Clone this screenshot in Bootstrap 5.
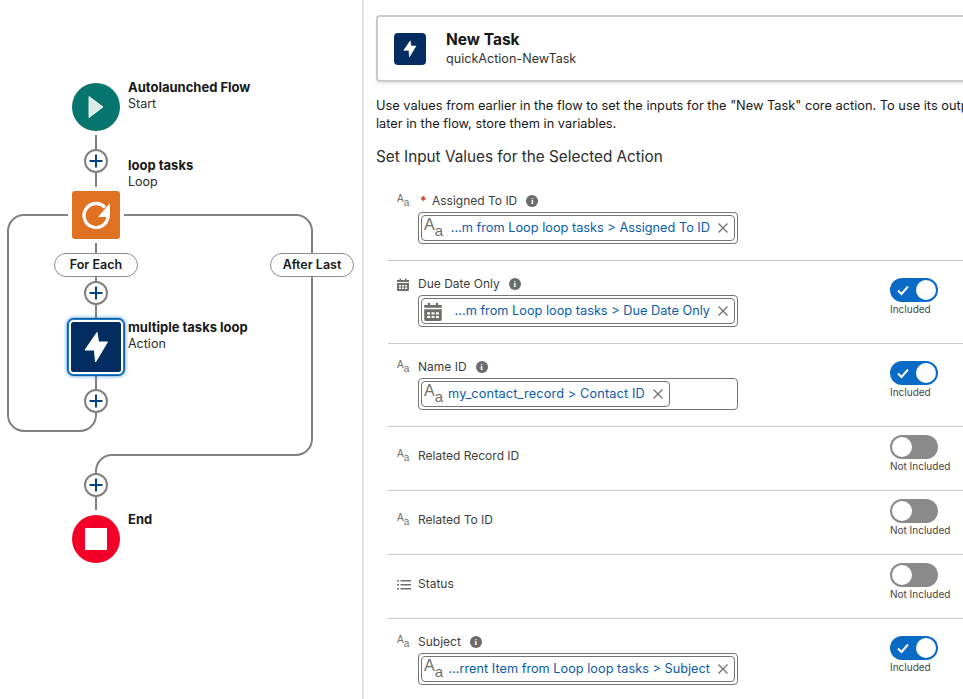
<!DOCTYPE html>
<html lang="en"><head><meta charset="utf-8"><title>New Task</title>
<link href="https://cdn.jsdelivr.net/npm/bootstrap@5.3.0/dist/css/bootstrap.min.css" rel="stylesheet">
<style>
html,body{height:100%;}
body{width:963px;height:699px;overflow:hidden;font-family:Inter,"Liberation Sans",sans-serif;font-size:12px;color:#181818;background:#fff;}
.flow-pane{position:relative;width:362px;flex:none;height:699px;}
.flow-pane svg.wires{position:absolute;left:0;top:0;}
.node-label{position:absolute;left:128px;line-height:16px;font-size:12.5px;white-space:nowrap;color:#2b2b2b;}
.node-label b{display:block;font-weight:700;font-size:13px;color:#181818;margin:-1px 0 1px;}
.branch-pill{position:absolute;top:253px;width:84px;height:24px;border:1px solid #8a8a8a;border-radius:12px;background:#fff;font-weight:600;font-size:12.5px;line-height:22px;text-align:center;}
.detail-pane{flex:none;width:601px;height:699px;overflow:hidden;border-left:2px solid #e3e3e3;padding-left:12px;}
.detail-inner{width:660px;}
.action-card{margin-top:15px;height:67px;width:640px;border:2px solid #c9c9c9;border-radius:4px;box-shadow:0 2px 3px rgba(0,0,0,.08);padding-left:16px;gap:20px;}
.action-icon{width:32px;height:32px;background:#032d60;border-radius:4px;}
.action-copy{padding-top:2px;}
.action-title{font-size:15.500px;font-weight:700;line-height:18px;}
.action-sub{font-size:12.600px;line-height:20px;color:#333;}
.intro-text{margin:15px 0 0;font-size:12.800px;line-height:18px;width:640px;}
.section-title{margin:14px 0 0;font-size:15.300px;font-weight:400;line-height:20px;color:#2b2b2b;}
.field-list{margin:11px 0 0 12px;}
.field-row{display:grid;grid-template-columns:30px 472px auto;border-bottom:1px solid #c9c9c9;height:83px;padding-top:14px;}
.field-row.short-row{height:64px;padding-top:20px;}
.type-cell{height:18px;padding-left:9px;color:#706e6b;}
.aa-mark{display:inline-flex;color:#706e6b;font-family:"Liberation Sans",sans-serif;line-height:1;font-size:10px;vertical-align:top;margin-top:2px;}
.aa-mark i{font-style:normal;font-size:10px;position:relative;top:4px;}
.aa-big{font-size:16px;margin:0 5px 6px 0;}
.aa-big i{font-size:15px;top:6px;}
.label-line{height:18px;line-height:18px;gap:8px;font-size:12px;color:#3e3e3c;}
.req-star{color:#c23934;font-weight:700;width:6px;margin:0 -2px 0 2px;}
.info-dot{width:12px;height:12px;border-radius:50%;background:#6b6b6b;color:#fff;font:700 9px/12px "Liberation Serif",serif;text-align:center;margin-left:1px;}
.value-box{margin-top:2px;width:320px;height:32px;border:1px solid #747474;border-radius:4px;padding:2px;}
.value-pill{height:26px;border:1px solid #747474;border-radius:4px;padding:0 6px 0 2px;color:#0b5cab;font-size:12.750px;white-space:nowrap;}
.value-pill.full-pill{width:100%;}
.value-pill .pill-text{margin-left:auto;margin-right:8px;}
.name-text{letter-spacing:.13px;}
.x-mark{flex:none;}
.toggle-cell{padding-top:3px;}
.short-row .toggle-cell{margin-top:-15px;}
.switch-track{width:48px;height:24px;border-radius:12px;padding:2px;}
.switch-track.on{background:#0a6bc7;justify-content:space-between;}
.switch-track.off{background:#8a8a8a;}
.switch-knob{width:20px;height:20px;border-radius:50%;background:#fff;}
.switch-text{font-size:10px;line-height:12px;margin-top:1px;color:#444;white-space:nowrap;}
</style></head>
<body class="d-flex">
<div class="flow-pane">
<svg class="wires" width="362" height="699" viewBox="0 0 362 699" fill="none">
<g stroke="#808080" stroke-width="2">
<path d="M96 135V187M96 243V253M96 277V319M96 375V415A16 16 0 0 1 80 431H24A16 16 0 0 1 8 415V231A16 16 0 0 1 24 215H68"/>
<path d="M124 215H296A16 16 0 0 1 312 231V253M312 277V439A16 16 0 0 1 296 455H112A16 16 0 0 0 96 471V510"/>
</g>
<circle cx="96" cy="107" r="24" fill="#06756e"/>
<path d="M89 96.500V117.500L103 107Z" fill="#fff" fill-opacity=".85" stroke="#fff" stroke-opacity=".85" stroke-linejoin="round"/>
<rect x="72" y="191" width="48" height="48" rx="3" fill="#e07022"/>
<path d="M105 207.500A12 12 0 1 0 108 216.500" stroke="#fff" stroke-width="3.300"/>
<path d="M110 203V217H98Z" fill="#fff"/>
<rect x="65" y="316" width="62" height="62" rx="9" stroke="#1b7fd6" stroke-opacity=".15" stroke-width="2"/>
<rect x="67" y="318" width="58" height="58" rx="7" fill="#032d60" stroke="#1b7fd6" stroke-opacity=".4" stroke-width="2"/>
<rect x="68.500" y="319.500" width="55" height="55" rx="5.500" stroke="#1b7fd6" stroke-width="1.500"/>
<rect x="70" y="321" width="52" height="52" rx="3.500" stroke="#fff" stroke-width="2"/>
<path d="M97 332.500L85 350H94.500L95.500 362L107.500 342H98.500Z" fill="#fff" stroke="#fff" stroke-linejoin="round"/>
<circle cx="96" cy="539" r="24" fill="#f20028"/>
<rect x="85" y="528" width="22" height="22" fill="#fff"/>
<g>
<circle cx="96" cy="161" r="11" fill="#fff" stroke="#808080" stroke-width="2"/><path d="M96 154.500V167.500M89.500 161H102.500" stroke="#014486" stroke-width="2"/>
<circle cx="96" cy="293" r="11" fill="#fff" stroke="#808080" stroke-width="2"/><path d="M96 286.500V299.500M89.500 293H102.500" stroke="#014486" stroke-width="2"/>
<circle cx="96" cy="401" r="11" fill="#fff" stroke="#808080" stroke-width="2"/><path d="M96 394.500V407.500M89.500 401H102.500" stroke="#014486" stroke-width="2"/>
<circle cx="96" cy="485" r="11" fill="#fff" stroke="#808080" stroke-width="2"/><path d="M96 478.500V491.500M89.500 485H102.500" stroke="#014486" stroke-width="2"/>
</g>
</svg>
<div class="node-label" style="top:80px"><b>Autolaunched Flow</b>Start</div>
<div class="node-label" style="top:158px"><b>loop tasks</b>Loop</div>
<div class="node-label" style="top:320px"><b>multiple tasks loop</b>Action</div>
<div class="node-label" style="top:512px"><b>End</b></div>
<div class="branch-pill" style="left:54px">For Each</div>
<div class="branch-pill" style="left:270px">After Last</div>
</div>

<div class="detail-pane"><div class="detail-inner">
<div class="action-card d-flex align-items-center">
<div class="action-icon d-flex align-items-center justify-content-center">
<svg width="14" height="18" viewBox="84 331 25 33"><path d="M97 332.500L85 350H94.500L95.500 362L107.500 342H98.500Z" fill="#fff" stroke="#fff" stroke-linejoin="round"/></svg>
</div>
<div class="action-copy"><div class="action-title">New Task</div><div class="action-sub">quickAction-NewTask</div></div>
</div>
<p class="intro-text">Use values from earlier in the flow to set the inputs for the "New Task" core action. To use its outputs later in the flow, store them in variables.</p>
<h2 class="section-title">Set Input Values for the Selected Action</h2>
<div class="field-list">

<div class="field-row">
<div class="type-cell"><span class="aa-mark">A<i>a</i></span></div>
<div><div class="label-line d-flex align-items-center"><span class="req-star">*</span><span>Assigned To ID</span><span class="info-dot">i</span></div>
<div class="value-box"><div class="value-pill full-pill d-flex align-items-center"><span class="aa-mark aa-big">A<i>a</i></span><span class="pill-text">...m from Loop loop tasks &gt; Assigned To ID</span><svg class="x-mark" width="10" height="10" viewBox="0 0 10 10"><path d="M.5.500L9.500 9.500M9.500.500L.5 9.500" stroke="#706e6b" stroke-width="1.200"/></svg></div></div></div>
<div></div>
</div>

<div class="field-row">
<div class="type-cell"><svg width="12" height="13" viewBox="0 0 12 13"><path fill="#706e6b" d="M0 2h12v2H0zM2.500 0.500h1.500V2h-1.500zM8 0.500h1.500V2H8zM0 5h12v7a1 1 0 0 1-1 1H1a1 1 0 0 1-1-1z"/><path fill="#fff" d="M2 7h2v1.500H2zM5 7h2v1.500H5zM8 7h2v1.500H8zM2 9.500h2V11H2zM5 9.500h2V11H5zM8 9.500h2V11H8z"/></svg></div>
<div><div class="label-line d-flex align-items-center"><span>Due Date Only</span><span class="info-dot">i</span></div>
<div class="value-box"><div class="value-pill full-pill d-flex align-items-center"><svg width="18" height="19" viewBox="0 0 12 13"><path fill="#706e6b" d="M0 2h12v2H0zM2.500 0.500h1.500V2h-1.500zM8 0.500h1.500V2H8zM0 5h12v7a1 1 0 0 1-1 1H1a1 1 0 0 1-1-1z"/><path fill="#fff" d="M2 7h2v1.500H2zM5 7h2v1.500H5zM8 7h2v1.500H8zM2 9.500h2V11H2zM5 9.500h2V11H5zM8 9.500h2V11H8z"/></svg><span class="pill-text">...m from Loop loop tasks &gt; Due Date Only</span><svg class="x-mark" width="10" height="10" viewBox="0 0 10 10"><path d="M.5.500L9.500 9.500M9.500.500L.5 9.500" stroke="#706e6b" stroke-width="1.200"/></svg></div></div></div>
<div class="toggle-cell"><div class="switch-track on d-flex align-items-center"><svg class="ms-1" width="14" height="12" viewBox="0 0 14 12"><path d="M2 6.500L5.500 10L12 2.500" fill="none" stroke="#fff" stroke-width="2"/></svg><span class="switch-knob"></span></div><div class="switch-text">Included</div></div>
</div>

<div class="field-row">
<div class="type-cell"><span class="aa-mark">A<i>a</i></span></div>
<div><div class="label-line d-flex align-items-center"><span>Name ID</span><span class="info-dot">i</span></div>
<div class="value-box"><div class="value-pill d-inline-flex align-items-center"><span class="aa-mark aa-big">A<i>a</i></span><span class="pill-text name-text">my_contact_record &gt; Contact ID</span><svg class="x-mark" width="10" height="10" viewBox="0 0 10 10"><path d="M.5.500L9.500 9.500M9.500.500L.5 9.500" stroke="#706e6b" stroke-width="1.200"/></svg></div></div></div>
<div class="toggle-cell"><div class="switch-track on d-flex align-items-center"><svg class="ms-1" width="14" height="12" viewBox="0 0 14 12"><path d="M2 6.500L5.500 10L12 2.500" fill="none" stroke="#fff" stroke-width="2"/></svg><span class="switch-knob"></span></div><div class="switch-text">Included</div></div>
</div>

<div class="field-row short-row">
<div class="type-cell"><span class="aa-mark">A<i>a</i></span></div>
<div class="label-line">Related Record ID</div>
<div class="toggle-cell"><div class="switch-track off d-flex align-items-center"><span class="switch-knob"></span></div><div class="switch-text">Not Included</div></div>
</div>

<div class="field-row short-row">
<div class="type-cell"><span class="aa-mark">A<i>a</i></span></div>
<div class="label-line">Related To ID</div>
<div class="toggle-cell"><div class="switch-track off d-flex align-items-center"><span class="switch-knob"></span></div><div class="switch-text">Not Included</div></div>
</div>

<div class="field-row short-row">
<div class="type-cell"><svg width="14" height="10" viewBox="0 0 14 10"><path fill="#706e6b" d="M0 0h2v1.500H0zM3.500 0H14v1.500H3.500zM0 4h2v1.500H0zM3.500 4H14v1.500H3.500zM0 8h2v1.500H0zM3.500 8H14v1.500H3.500z"/></svg></div>
<div class="label-line">Status</div>
<div class="toggle-cell"><div class="switch-track off d-flex align-items-center"><span class="switch-knob"></span></div><div class="switch-text">Not Included</div></div>
</div>

<div class="field-row">
<div class="type-cell"><span class="aa-mark">A<i>a</i></span></div>
<div><div class="label-line d-flex align-items-center"><span>Subject</span><span class="info-dot">i</span></div>
<div class="value-box"><div class="value-pill full-pill d-flex align-items-center"><span class="aa-mark aa-big">A<i>a</i></span><span class="pill-text">...rrent Item from Loop loop tasks &gt; Subject</span><svg class="x-mark" width="10" height="10" viewBox="0 0 10 10"><path d="M.5.500L9.500 9.500M9.500.500L.5 9.500" stroke="#706e6b" stroke-width="1.200"/></svg></div></div></div>
<div class="toggle-cell"><div class="switch-track on d-flex align-items-center"><svg class="ms-1" width="14" height="12" viewBox="0 0 14 12"><path d="M2 6.500L5.500 10L12 2.500" fill="none" stroke="#fff" stroke-width="2"/></svg><span class="switch-knob"></span></div><div class="switch-text">Included</div></div>
</div>

</div>
</div></div>
<script src="https://cdn.jsdelivr.net/npm/bootstrap@5.3.0/dist/js/bootstrap.bundle.min.js"></script>
</body></html>
